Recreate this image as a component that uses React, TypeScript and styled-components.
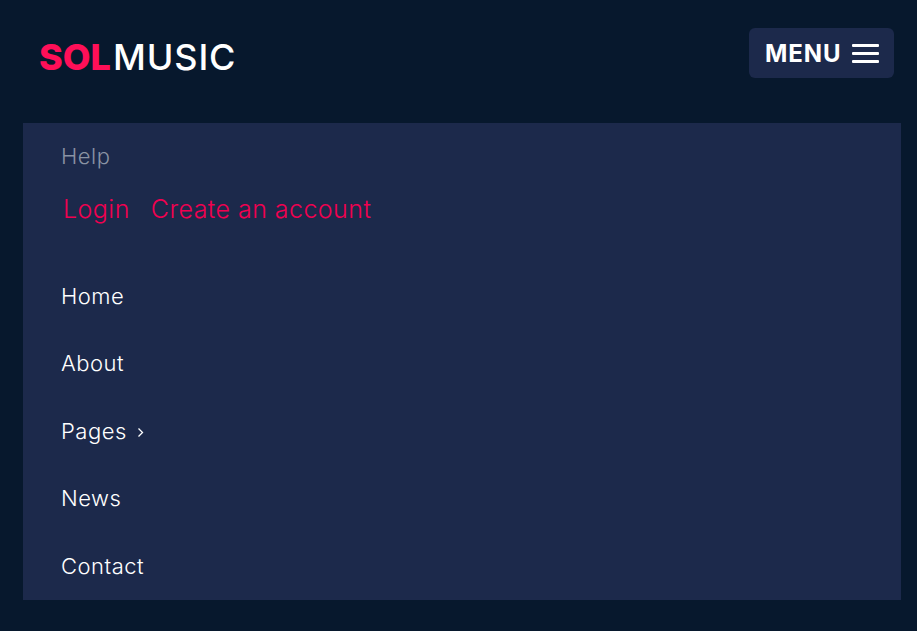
import * as React from 'react'
import styled, { createGlobalStyle } from 'styled-components'

const GlobalStyle = createGlobalStyle`
  html, body {
    margin: 0;
    padding: 0;
    background: #07182d;
  }
  body {
    font-family: Inter, "Liberation Sans", sans-serif;
  }
`

const Page = styled.div`
  width: 917px;
  height: 631px;
  overflow: hidden;
  background: #07182d;
`

const Header = styled.header`
  display: flex;
  align-items: flex-start;
  justify-content: space-between;
  height: 123px;
  padding: 28px 23px 0 39px;
  box-sizing: border-box;
`

const Logo = styled.div`
  margin-top: 9px;
  font-size: 36px;
  line-height: 40px;
  letter-spacing: 0.9px;
  font-weight: 500;
  color: #fff;
  white-space: nowrap;
`

const LogoAccent = styled.span`
  margin-right: 2px;
  color: #ff0f58;
  font-weight: 800;
  letter-spacing: 0;
`

const MenuButton = styled.button`
  display: flex;
  align-items: center;
  width: 145px;
  height: 50px;
  padding: 0 15px 0 16px;
  box-sizing: border-box;
  justify-content: space-between;
  border: 0;
  border-radius: 6px;
  background: #1c294b;
  color: #fff;
  font-family: inherit;
  font-size: 24px;
  font-weight: 700;
  letter-spacing: 0.9px;
`

const Burger = styled.span`
  display: flex;
  flex-direction: column;
  gap: 5px;
  width: 27px;
`

const BurgerLine = styled.span`
  display: block;
  height: 3px;
  border-radius: 1px;
  background: #fff;
`

const Panel = styled.nav`
  width: 878px;
  height: 477px;
  margin-left: 23px;
  padding: 19px 0 0 38px;
  box-sizing: border-box;
  overflow: hidden;
  background: #1c294b;
`

const Help = styled.div`
  font-size: 22px;
  line-height: 28px;
  font-weight: 350;
  letter-spacing: 0.5px;
  color: #8a93a3;
`

const AccountRow = styled.div`
  display: flex;
  gap: 21px;
  margin: 21px 0 0 2px;
`

const AccountLink = styled.a`
  font-size: 25px;
  line-height: 36px;
  font-weight: 350;
  letter-spacing: 0.45px;
  color: #f10050;
`

const NavList = styled.ul`
  margin: 35px 0 0;
  padding: 0;
  list-style: none;
`

const NavItem = styled.li`
  display: flex;
  align-items: center;
  gap: 10px;
  height: 67.5px;
  font-size: 22px;
  font-weight: 350;
  letter-spacing: 0.5px;
  color: #fff;
`

const Chevron = styled.svg`
  width: 7px;
  height: 11px;
  margin-top: 3px;
`

const items = ['Home', 'About', 'Pages', 'News', 'Contact']

export default function App() {
  return (
    <Page>
      <GlobalStyle />
      <Header>
        <Logo>
          <LogoAccent>SOL</LogoAccent>MUSIC
        </Logo>
        <MenuButton>
          MENU
          <Burger>
            <BurgerLine />
            <BurgerLine />
            <BurgerLine />
          </Burger>
        </MenuButton>
      </Header>
      <Panel>
        <Help>Help</Help>
        <AccountRow>
          <AccountLink>Login</AccountLink>
          <AccountLink>Create an account</AccountLink>
        </AccountRow>
        <NavList>
          {items.map(item => (
            <NavItem key={item}>
              {item}
              {item === 'Pages' && (
                <Chevron viewBox="0 0 7 11" fill="none" stroke="#fff" strokeWidth="1.3">
                  <path d="M1.5 1.5 5.5 5.5 1.5 9.5" />
                </Chevron>
              )}
            </NavItem>
          ))}
        </NavList>
      </Panel>
    </Page>
  )
}
